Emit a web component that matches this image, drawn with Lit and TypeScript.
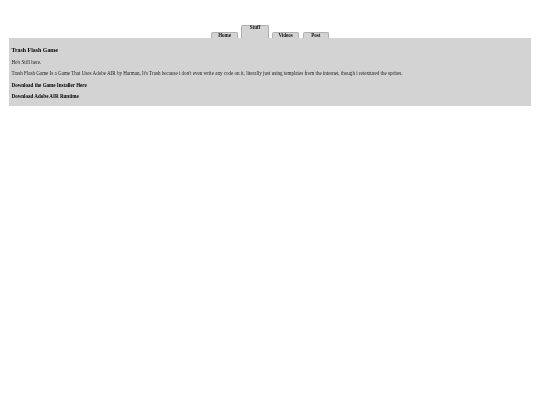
import { LitElement, html, css } from "lit";
import { customElement } from "lit/decorators.js";

@customElement("app-root")
export class AppRoot extends LitElement {
  static styles = css`
    :host { display: block; font-family: "Liberation Serif", "Times New Roman", serif; color: #000; }
    .page { padding: 25px 9px 0; will-change: opacity; }
    .tabs { display: flex; justify-content: center; align-items: flex-end; gap: 3px; height: 13.4px; }
    .tab {
      width: 27px; height: 6.9px; box-sizing: border-box; background: #d3d3d3;
      border: 0.5px solid #b0b0b0; border-bottom: none; border-radius: 2px 2px 0 0;
      font-size: 5.06px; font-weight: bold; line-height: 4.6px; text-align: center; color: #111;
    }
    .tab.active { height: 13.4px; width: 28px; line-height: 3.5px; }
    .tab.narrow { width: 26px; margin-left: 0.8px; }
    .panel { background: #d3d3d3; height: 67.6px; box-sizing: border-box; padding: 8.5px 2.5px 0; }
    h1 { margin: 0; font-size: 5.9px; line-height: 6px; font-weight: bold; }
    p { margin: 0; font-size: 5.06px; line-height: 5px; white-space: nowrap; }
    .still { margin-top: 7.3px; color: #222; }
    .desc { margin-top: 6.2px; color: #222; }
    .dl { margin-top: 6.6px; font-weight: bold; }
    .dl + .dl { margin-top: 5.9px; }
  `;

  render() {
    return html`
      <div class="page">
        <nav class="tabs">
          <div class="tab">Home</div>
          <div class="tab active">Stuff</div>
          <div class="tab">Videos</div>
          <div class="tab narrow">Post</div>
        </nav>
        <main class="panel">
          <h1>Trash Flash Game</h1>
          <p class="still">He's Still here.</p>
          <p class="desc">Trash Flash Game Is a Game That Uses Adobe AIR by Harman, It's Trash because i don't even write any code on it, literally just using templates from the internet, though i retextured the sprites.</p>
          <p class="dl">Download the Game Installer Here</p>
          <p class="dl">Download Adobe AIR Runtime</p>
        </main>
      </div>
    `;
  }
}
